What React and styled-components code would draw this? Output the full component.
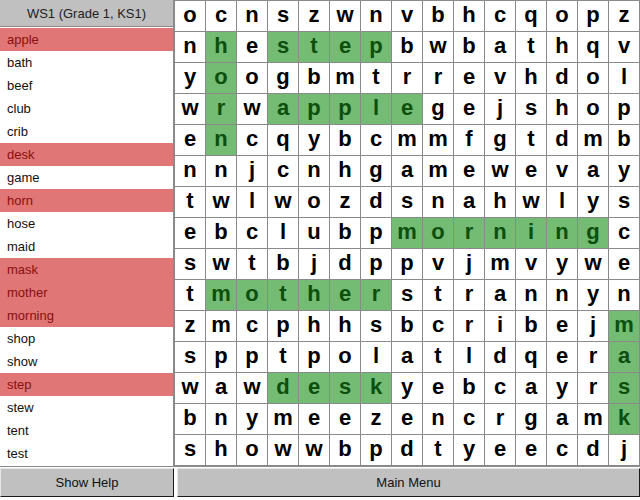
import React from 'react'
import styled, { createGlobalStyle } from 'styled-components'

const GRID = [
  'ocnszwnvbhcqopz',
  'nhestepbwbathqv',
  'yoogbmtrrevhdol',
  'wrwapplegejshop',
  'encqybcmmfgtdmb',
  'nnjcnhgamewevay',
  'twlwozdsnahwlys',
  'ebclubpmorningc',
  'swtbjdppvjmvywe',
  'tmotherstrannyn',
  'zmcphhsbcribejm',
  'spptpolatldqera',
  'wawdeskyebcayrs',
  'bnymeezencrgamk',
  'showwbpdtyeecdj',
]

// found words: [row, col, dRow, dCol, length]
const FOUND = [
  [1, 1, 1, 0, 4], // horn
  [1, 3, 0, 1, 4], // step
  [3, 3, 0, 1, 5], // apple
  [7, 7, 0, 1, 7], // morning
  [9, 1, 0, 1, 6], // mother
  [12, 3, 0, 1, 4], // desk
  [10, 14, 1, 0, 4], // mask
]

const WORDS = [
  'apple', 'bath', 'beef', 'club', 'crib', 'desk', 'game', 'horn', 'hose',
  'maid', 'mask', 'mother', 'morning', 'shop', 'show', 'step', 'stew',
  'tent', 'test',
]
const DONE = ['apple', 'desk', 'horn', 'mask', 'mother', 'morning', 'step']

const marked = new Set()
FOUND.forEach(([r, c, dr, dc, n]) => {
  for (let i = 0; i < n; i++) marked.add(`${r + dr * i}-${c + dc * i}`)
})

const GlobalStyle = createGlobalStyle`
  html, body {
    margin: 0;
    padding: 0;
    background: #fff;
  }
  body {
    font-family: "Liberation Sans", Arial, sans-serif;
  }
`

const Screen = styled.div`
  width: 640px;
  height: 500px;
  display: flex;
  flex-direction: column;
  background: #fff;
  overflow: hidden;
`

const Main = styled.div`
  display: flex;
  height: 466px;
`

const Sidebar = styled.div`
  width: 173px;
  border-right: 1px solid #8a8a8a;
  display: flex;
  flex-direction: column;
`

const Title = styled.div`
  height: 26px;
  background: #c0c0c0;
  border-bottom: 1px solid #8a8a8a;
  display: flex;
  align-items: center;
  justify-content: center;
  font-size: 13px;
  color: #222;
`

const WordList = styled.ul`
  list-style: none;
  margin: 0;
  padding: 1px 0 0;
`

const Word = styled.li`
  height: 23px;
  line-height: 23px;
  padding-left: 7px;
  font-size: 13px;
  background: ${p => (p.$done ? '#e07676' : '#fff')};
  color: ${p => (p.$done ? '#8a0f0f' : '#111')};
`

const Board = styled.div`
  display: grid;
  grid-template-columns: repeat(15, 30px);
  grid-auto-rows: 30px;
  gap: 1px;
  padding: 1px;
  background: #8a8a8a;
  height: 464px;
`

const Cell = styled.div`
  display: flex;
  align-items: center;
  justify-content: center;
  font-size: 22px;
  font-weight: bold;
  background: ${p => (p.$hit ? '#74bb74' : '#fff')};
  color: ${p => (p.$hit ? '#0d4f0d' : '#000')};
  padding-bottom: 2px;
  box-sizing: border-box;
`

const Footer = styled.div`
  display: flex;
  gap: 3px;
  border-top: 1px solid #8a8a8a;
  padding-top: 1px;
`

const Button = styled.button`
  width: ${p => p.$width || 'auto'};
  flex: ${p => (p.$width ? 'none' : 1)};
  height: 29px;
  margin: 0;
  padding: 0;
  background: #c0c0c0;
  border: 1px solid;
  border-color: #e6e6e6 #1a1a1a #1a1a1a #e6e6e6;
  font-family: "Liberation Sans", Arial, sans-serif;
  font-size: 13px;
  color: #111;
`

export default function App() {
  return (
    <Screen>
      <GlobalStyle />
      <Main>
        <Sidebar>
          <Title>WS1 (Grade 1, KS1)</Title>
          <WordList>
            {WORDS.map(w => (
              <Word key={w} $done={DONE.includes(w)}>
                {w}
              </Word>
            ))}
          </WordList>
        </Sidebar>
        <Board>
          {GRID.map((row, r) =>
            row.split('').map((ch, c) => (
              <Cell key={`${r}-${c}`} $hit={marked.has(`${r}-${c}`)}>
                {ch}
              </Cell>
            ))
          )}
        </Board>
      </Main>
      <Footer>
        <Button $width="174px">Show Help</Button>
        <Button>Main Menu</Button>
      </Footer>
    </Screen>
  )
}
